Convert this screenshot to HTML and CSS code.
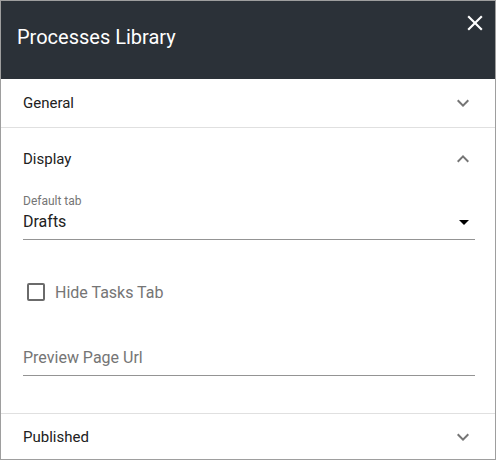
FILE: index.html
```html
<!DOCTYPE html>
<html>
<head>
<meta charset="utf-8">
<link rel="stylesheet" href="styles.css">
</head>
<body>
<div class="dialog">
  <header class="dlg-header">
    <h1 class="dlg-title">Processes Library</h1>
    <button class="close-btn" aria-label="Close">
      <svg viewBox="0 0 24 24" width="26" height="26"><path d="M19 6.41L17.590 5 12 10.59 6.41 5 5 6.41 10.59 12 5 17.59 6.41 19 12 13.41 17.59 19 19 17.59 13.41 12z" fill="#fff"/></svg>
    </button>
  </header>

  <section class="panel">
    <div class="panel-head collapsed">
      <span class="panel-title">General</span>
      <svg class="chev" viewBox="0 0 24 24" width="24" height="24"><path d="M16.59 8.59L12 13.17 7.41 8.59 6 10l6 6 6-6z" fill="#757575"/></svg>
    </div>
  </section>

  <section class="panel expanded">
    <div class="panel-head open">
      <span class="panel-title">Display</span>
      <svg class="chev" viewBox="0 0 24 24" width="24" height="24"><path d="M12 8l-6 6 1.41 1.41L12 10.83l4.59 4.58L18 14z" fill="#757575"/></svg>
    </div>
    <div class="panel-body">
      <div class="field select-field">
        <div class="field-label">Default tab</div>
        <div class="field-value">
          <span>Drafts</span>
          <svg class="drop" viewBox="0 0 24 24" width="24" height="24"><path d="M7 10l5 5 5-5z" fill="#000"/></svg>
        </div>
      </div>
      <label class="check-row">
        <span class="checkbox"></span>
        <span class="check-label">Hide Tasks Tab</span>
      </label>
      <div class="field text-field">
        <div class="field-value placeholder">Preview Page Url</div>
      </div>
    </div>
  </section>

  <section class="panel">
    <div class="panel-head last">
      <span class="panel-title">Published</span>
      <svg class="chev" viewBox="0 0 24 24" width="24" height="24"><path d="M16.59 8.59L12 13.17 7.41 8.59 6 10l6 6 6-6z" fill="#757575"/></svg>
    </div>
  </section>
</div>
</body>
</html>
```
FILE: styles.css
```css
* { box-sizing: border-box; }
html, body { margin: 0; padding: 0; background: #fff; }
body { font-family: Roboto, "Noto Sans", sans-serif; color: #212121; }

.dialog {
  width: 496px;
  height: 460px;
  border: 1px solid #9e9e9e;
  overflow: hidden;
  display: flex;
  flex-direction: column;
}

.dlg-header {
  height: 78px;
  background: #2b3138;
  display: flex;
  align-items: flex-start;
  justify-content: space-between;
  padding: 0 0 0 16px;
  flex-shrink: 0;
}
.dlg-title {
  margin: 24px 0 0 0;
  font-size: 20px;
  line-height: 24px;
  font-weight: 400;
  color: #fff;
}
.close-btn {
  background: none;
  border: 0;
  padding: 0;
  margin: 9px 7px 0 0;
  width: 26px;
  height: 26px;
  display: flex;
}

.panel { border-bottom: 1px solid #e0e0e0; flex-shrink: 0; }
.panel:last-child { border-bottom: 0; }

.panel-head {
  display: flex;
  align-items: center;
  justify-content: space-between;
  padding: 0 20px 0 22px;
  height: 48px;
}
.panel-head.open { height: 61px; }
.panel-head.last { height: 46px; }
.panel-title { font-size: 15px; line-height: 20px; }
.chev { display: block; }

.panel-body { padding: 0 20px 37px 22px; }

.field { border-bottom: 1px solid #949494; }
.select-field { margin-top: 5px; }
.field-label { font-size: 12px; line-height: 14px; color: #757575; }
.field-value {
  display: flex;
  align-items: center;
  justify-content: space-between;
  font-size: 16px;
  line-height: 24px;
  height: 24px;
  margin-top: 2px;
  margin-bottom: 5px;
}
.drop { margin-right: -1px; }
.placeholder { color: #757575; margin-top: 0; }

.check-row {
  display: flex;
  align-items: center;
  height: 24px;
  margin-top: 40px;
  padding-left: 4px;
}
.checkbox {
  width: 18px;
  height: 18px;
  border: 2px solid #6b6b6b;
  border-radius: 2px;
}
.check-label {
  margin-left: 10px;
  font-size: 16px;
  color: #757575;
}

.text-field { margin-top: 42px; }
```
